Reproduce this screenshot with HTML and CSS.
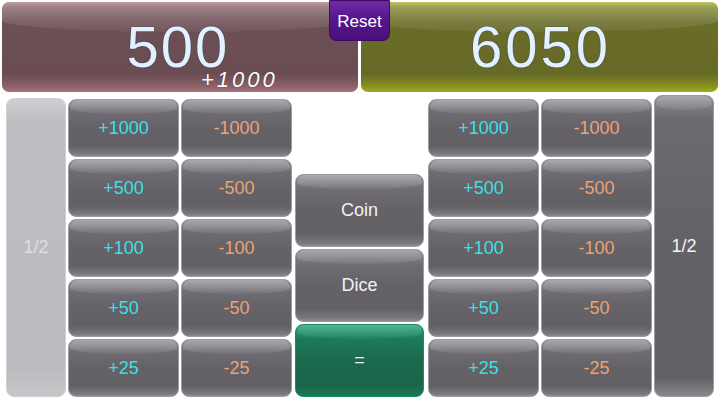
FILE: index.html
```html
<!DOCTYPE html>
<html>
<head>
<meta charset="utf-8">
<link rel="stylesheet" href="styles.css">
</head>
<body>
<div class="app">
  <header class="scores">
    <div class="score score-a">
      <span class="value">500</span>
      <span class="delta">+1000</span>
    </div>
    <div class="score score-b">
      <span class="value">6050</span>
    </div>
    <button class="reset">Reset</button>
  </header>
  <main class="pad">
    <div class="half half-off"><span>1/2</span></div>
    <div class="col">
      <div class="btn plus">+1000</div>
      <div class="btn plus">+500</div>
      <div class="btn plus">+100</div>
      <div class="btn plus">+50</div>
      <div class="btn plus">+25</div>
    </div>
    <div class="col">
      <div class="btn minus">-1000</div>
      <div class="btn minus">-500</div>
      <div class="btn minus">-100</div>
      <div class="btn minus">-50</div>
      <div class="btn minus">-25</div>
    </div>
    <div class="center">
      <div class="btn big">Coin</div>
      <div class="btn big">Dice</div>
      <div class="btn big green">=</div>
    </div>
    <div class="col">
      <div class="btn plus">+1000</div>
      <div class="btn plus">+500</div>
      <div class="btn plus">+100</div>
      <div class="btn plus">+50</div>
      <div class="btn plus">+25</div>
    </div>
    <div class="col">
      <div class="btn minus">-1000</div>
      <div class="btn minus">-500</div>
      <div class="btn minus">-100</div>
      <div class="btn minus">-50</div>
      <div class="btn minus">-25</div>
    </div>
    <div class="half half-on btn"><span>1/2</span></div>
  </main>
</div>
</body>
</html>
```
FILE: styles.css
```css
* { box-sizing: border-box; }
html, body { margin: 0; padding: 0; background: #ffffff; }
body {
  width: 720px;
  height: 408px;
  overflow: hidden;
  font-family: "Liberation Sans", Arial, sans-serif;
}
.app { padding: 2px 0 0 0; }

.scores {
  position: relative;
  display: flex;
  gap: 3px;
  padding: 0 2px;
  height: 90px;
}
.score {
  position: relative;
  flex: 1;
  border-radius: 7px;
  display: flex;
  align-items: center;
  justify-content: center;
  overflow: hidden;
}
.score::before {
  content: "";
  position: absolute;
  left: 0; right: 0; top: 0;
  height: 30px;
  border-radius: 7px 7px 60% 60% / 7px 7px 14px 14px;
  background: linear-gradient(rgba(255,255,255,0.28), rgba(255,255,255,0.04));
}
.score-a {
  background: linear-gradient(#a8737a 0%, #7e5a61 6%, #6d4f56 20%, #6a4c53 80%, #8a6068 93%, #a8727a 100%);
}
.score-b {
  flex: 0 0 357px;
  background: linear-gradient(#a7b01b 0%, #7b8022 6%, #6a6d28 20%, #666a27 80%, #878f1f 93%, #a1ab19 100%);
}
.value {
  position: relative;
  font-size: 58px;
  letter-spacing: 2px;
  color: #e1f1ff;
  text-shadow: 0 0 1px #3a3a4a, 0 0 1px #3a3a4a;
  line-height: 42px;
}
.score-b .value { letter-spacing: 3px; margin-left: 2px; }
.score-a .value { margin-left: -4px; }
.delta {
  position: absolute;
  left: 199px;
  top: 68px;
  font-size: 22px;
  line-height: 20px;
  font-style: italic;
  color: #ffffff;
  letter-spacing: 3px;
  text-shadow: 0 0 1px #3a2a30;
}
.reset {
  position: absolute;
  left: 329px;
  top: -2px;
  width: 61px;
  height: 41px;
  border: 1px solid #3d0a63;
  border-radius: 0 0 7px 7px;
  background: linear-gradient(#6e2ca6 0%, #58188e 40%, #4a0e7a 100%);
  color: #ffffff;
  font-family: "Liberation Sans", Arial, sans-serif;
  font-size: 17px;
  padding: 2px 0 0 0;
}

.pad {
  display: flex;
  gap: 2px;
  padding: 0 6px;
  margin-top: 3px;
  height: 302px;
}
.col {
  display: flex;
  flex-direction: column;
  gap: 2px;
  width: 111px;
  padding-top: 4px;
}
.center {
  display: flex;
  flex-direction: column;
  justify-content: flex-end;
  gap: 2px;
  width: 129px;
  margin: 0 2px 0 1px;
}
.btn {
  position: relative;
  height: 58px;
  border-radius: 8px;
  border: 1px solid #9e9ca2;
  background: linear-gradient(#8a878d 0%, #6e6b72 22%, #646167 50%, #636066 82%, #7a777e 96%, #8e8b92 100%);
  display: flex;
  align-items: center;
  justify-content: center;
  font-size: 18px;
  color: #f2f2f4;
  overflow: hidden;
}
.btn::before {
  content: "";
  position: absolute;
  left: 1px; right: 1px; top: 0;
  height: 14px;
  border-radius: 7px 7px 50% 50% / 7px 7px 6px 6px;
  background: linear-gradient(rgba(255,255,255,0.28), rgba(255,255,255,0.06));
}
.plus { color: #3ae0e4; }
.minus { color: #eba275; }
.big { height: 73px; }
.green {
  border-color: #1e8a60;
  background: linear-gradient(#22a677 0%, #1c7a58 20%, #1b6a4e 50%, #1b664b 85%, #1d7a58 100%);
}
.green::before {
  background: linear-gradient(rgba(255,255,255,0.2), rgba(255,255,255,0.03));
}
.half {
  width: 60px;
  display: flex;
  align-items: center;
  justify-content: center;
  font-size: 18px;
}
.half-off {
  margin-top: 3px;
  border-radius: 8px;
  border: 1px solid #d0cfd2;
  background: linear-gradient(#cfced1 0%, #bebdc1 8%, #bbbabe 90%, #c6c5c8 100%);
  color: #dedee0;
}
.half-on {
  height: 302px;
  color: #f4f4f6;
  background: linear-gradient(#8a878d 0%, #6c696f 8%, #646167 50%, #636066 94%, #8a878d 100%);
}
```
